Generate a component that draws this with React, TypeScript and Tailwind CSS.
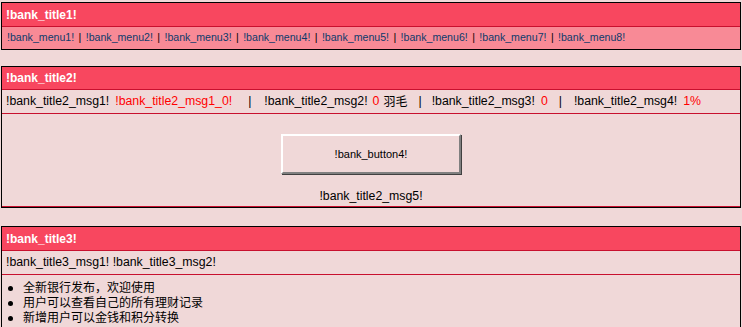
const menus = [1, 2, 3, 4, 5, 6, 7, 8]

const notes = ["全新银行发布，欢迎使用", "用户可以查看自己的所有理财记录", "新增用户可以金钱和积分转换"]

const App = () => {
  return (
    <div className="min-h-screen bg-[#f0d8d8] pt-[2px] font-['Liberation_Sans','Noto_Sans_CJK_SC',sans-serif] text-black">
      {/* Menu table */}
      <div className="mx-[1px] border border-black">
        <div className="flex h-[23px] items-center bg-[#f8475f] pl-[4px] text-[12px] font-bold text-white">
          !bank_title1!
        </div>
        <div className="flex h-[23px] items-center whitespace-nowrap border-t border-[#c8102e] bg-[#f88a96] pl-[5px] text-[10.6px] text-[#0b3a6b]">
          {menus.map((n) => (
            <span key={n}>
              {n > 1 && <span className="px-[4.4px] text-black">|</span>}
              <a href="#">!bank_menu{n}!</a>
            </span>
          ))}
        </div>
      </div>

      {/* Account table */}
      <div className="mx-[1px] mt-[16px] border border-black">
        <div className="flex h-[22px] items-center bg-[#f8475f] pl-[4px] text-[12px] font-bold text-white">
          !bank_title2!
        </div>
        <div className="flex h-[24px] items-center whitespace-nowrap border-t border-[#c8102e] pl-[4px] text-[12.3px]">
          <span>!bank_title2_msg1!</span>
          <span className="ml-[6px] text-[#ff0000]">!bank_title2_msg1_0!</span>
          <span className="ml-[16px]">|</span>
          <span className="ml-[13px]">!bank_title2_msg2!</span>
          <span className="ml-[5px] text-[#ff0000]">0</span>
          <span className="ml-[4px] text-[12px]">羽毛</span>
          <span className="ml-[11px]">|</span>
          <span className="ml-[10px]">!bank_title2_msg3!</span>
          <span className="ml-[6px] text-[#ff0000]">0</span>
          <span className="ml-[11px]">|</span>
          <span className="ml-[12px]">!bank_title2_msg4!</span>
          <span className="ml-[6px] text-[#ff0000]">1%</span>
        </div>
        <div className="flex h-[94px] flex-col items-center border-t border-b border-[#c8102e] pt-[20px]">
          <button className="h-[40px] w-[180px] border-2 border-t-white border-l-white border-r-[#808080] border-b-[#808080] bg-[#f0d8d8] text-[11px] shadow-[1px_1px_0_#404040]">
            !bank_button4!
          </button>
          <div className="mt-[15px] text-[12.3px] leading-[15px]">!bank_title2_msg5!</div>
        </div>
      </div>

      {/* Notice table */}
      <div className="mx-[1px] mt-[18px] border border-black">
        <div className="flex h-[23px] items-center bg-[#f8475f] pl-[4px] text-[12px] font-bold text-white">
          !bank_title3!
        </div>
        <div className="flex h-[24px] items-center border-t border-[#c8102e] pl-[4px] text-[12.3px]">
          !bank_title3_msg1! !bank_title3_msg2!
        </div>
        <ul className="border-t border-[#c8102e] pt-[6px] pb-[6px] text-[12px] leading-[15px]">
          {notes.map((t) => (
            <li key={t} className="flex items-center">
              <span className="ml-[6px] mr-[10px] h-[5px] w-[5px] rounded-full bg-black" />
              {t}
            </li>
          ))}
        </ul>
      </div>
    </div>
  )
}

export default App
